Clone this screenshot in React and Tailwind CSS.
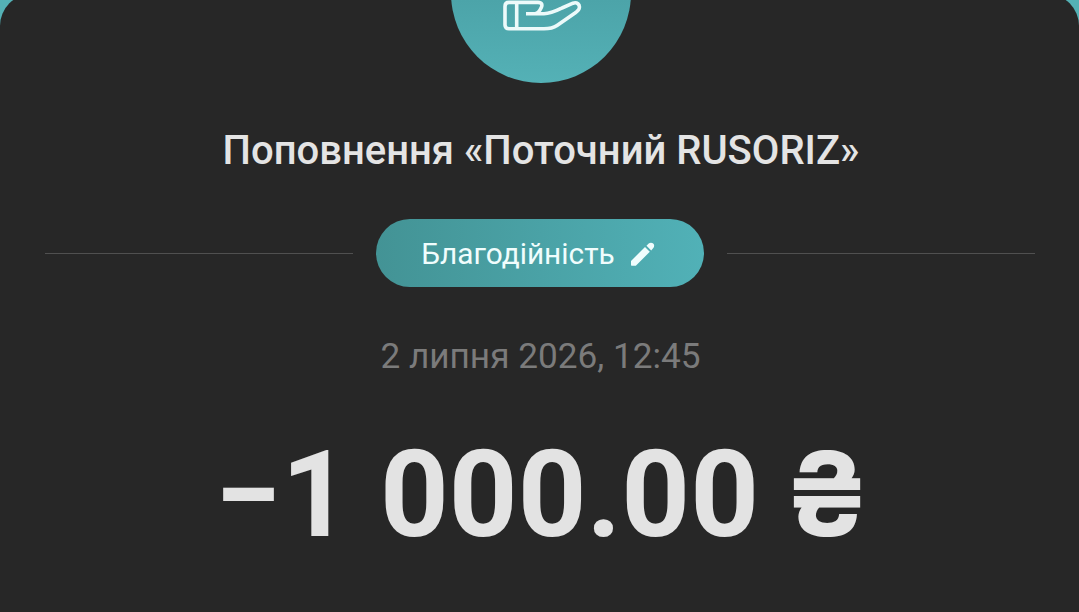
function HandIcon() {
  return (
    <svg width="82" height="34" viewBox="0 0 82 34" fill="none" stroke="#edfafa" strokeWidth="3.6" strokeLinejoin="round">
      <path d="M16.7 2.4V28.7M26 13.7H44C51 13.7 56 11 62 8L73 3.2C77 1.8 80 4.5 79.3 8C79 10 77 11.5 75 13L57 25.5C53 28.2 49 28.7 44 28.7H9C6.5 28.7 5 27.5 5 25V6.5C5 4 6.5 2.4 9 2.4H38C42 2.4 42.5 4.8 41.3 7.5C40 10.5 38.5 13.2 35 13.7" />
    </svg>
  );
}

function PencilIcon() {
  return (
    <svg width="24" height="24" viewBox="0 0 24 24" fill="#f0fdfd">
      <path d="M0 19L14 5L18.8 9.8L4.8 23.8H1C0.4 23.8 0 23.4 0 22.8Z" />
      <path d="M15.5 3.8L17.7 1.6C19 0.3 20.9 0.3 22.2 1.6C23.5 2.9 23.5 4.8 22.3 6L20.2 8.4Z" />
    </svg>
  );
}

function App() {
  return (
    <div className="h-[612px] w-[1079px] overflow-hidden bg-[#54b1b5] font-[Roboto,sans-serif]">
      <main className="-mt-1.5 flex h-[618px] flex-col items-center rounded-t-[32px] bg-[#272727]">
        <div className="-mt-[91px] ml-0.5 flex size-[180px] shrink-0 items-start justify-center rounded-full bg-linear-to-b from-[#43959a] to-[#54b1b6] pt-[97px]">
          <HandIcon />
        </div>
        <h1 className="mt-[44px] ml-[3px] text-[40px] leading-[48px] font-medium whitespace-nowrap text-[#e4e4e4]">
          Поповнення «Поточний RUSORIZ»
        </h1>
        <div className="mt-11 flex w-full items-center gap-[23px] pr-11 pl-[45px]">
          <div className="h-px flex-1 bg-[#505050]" />
          <button className="flex h-[68px] w-[328px] items-center justify-center gap-4 rounded-full bg-linear-to-r from-[#439395] to-[#51b1b7] pt-0.5 pr-1 text-[29.8px] text-[#f0fdfd]">
            <span>Благодійність</span>
            <PencilIcon />
          </button>
          <div className="h-px flex-1 bg-[#505050]" />
        </div>
        <time className="mt-[48px] ml-0.5 text-[35.2px] leading-[42px] whitespace-nowrap text-[#7b7b7b]">2 липня 2026, 12:45</time>
        <p className="mt-[46px] ml-1.5 text-[120px] leading-[144px] font-bold whitespace-nowrap text-[#e3e3e3]">
          −1 000.00 <span className="-ml-[5px] font-[Inter,sans-serif] text-[117px] leading-none">₴</span>
        </p>
      </main>
    </div>
  );
}

export default App;
